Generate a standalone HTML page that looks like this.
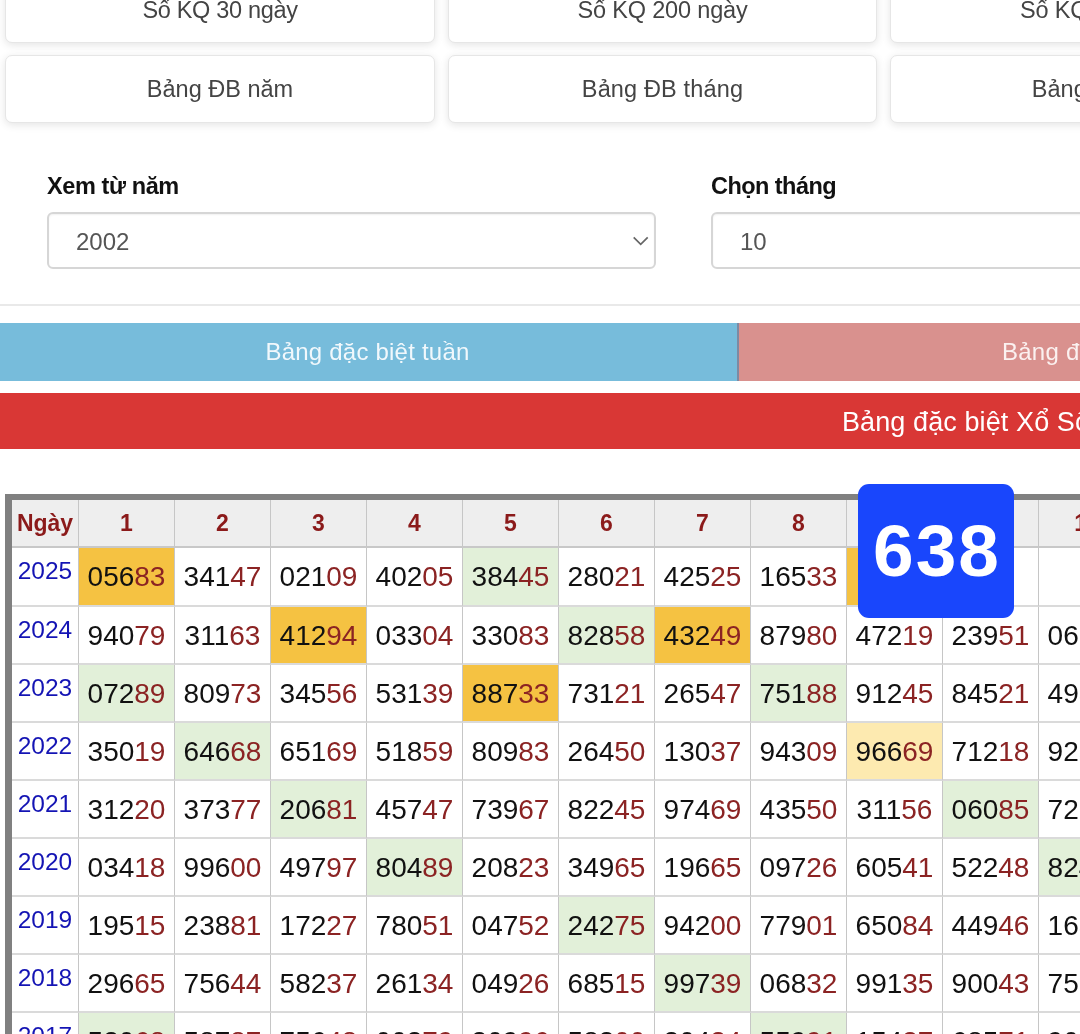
<!DOCTYPE html>
<html lang="vi"><head><meta charset="utf-8"><title>Bảng đặc biệt tháng</title>
<style>
html,body{margin:0;padding:0;background:#fff;}
body{will-change:transform;width:1080px;height:1034px;overflow:hidden;position:relative;font-family:"Liberation Sans",sans-serif;}
.btn{position:absolute;width:430px;height:67px;box-sizing:border-box;border:1px solid #e6e6e6;border-radius:7px;background:#fff;box-shadow:0 2px 8px rgba(0,0,0,.11);color:#444;font-size:23.5px;text-align:center;line-height:66px;white-space:nowrap;}
.b2{height:68px;}
.lbl{position:absolute;font-weight:bold;font-size:23.5px;letter-spacing:-0.4px;color:#111;white-space:nowrap;}
.sel{position:absolute;height:57px;box-sizing:border-box;border:2px solid #d6d6d6;border-radius:6px;background:#fff;box-shadow:inset 0 1px 2px rgba(0,0,0,.06);color:#555;font-size:24px;line-height:56px;padding-left:27px;}
.hr{position:absolute;left:0;top:304px;width:1080px;height:2px;background:#e9e9e9;}
.bar{position:absolute;color:#fff;white-space:nowrap;}
.t{position:absolute;left:5px;top:494px;border-collapse:separate;border-spacing:0;table-layout:fixed;border-left:7px solid #808080;border-top:6px solid #808080;width:1123px;}
.t th,.t td{border-right:1px solid #c6c6c6;border-bottom:2px solid #dadada;padding:0;text-align:center;white-space:nowrap;box-sizing:border-box;width:96px;}
.t th{border-bottom-color:#c8c8c8;height:48px;background:#eee;color:#8b1a1a;font-size:23px;font-weight:bold;}
.t th.d,.t td.y{width:67px;}
.t td{height:58px;font-size:28px;color:#111;padding-top:2px;}
.t tr.r1 td{height:59px;padding-top:0;}
.t tr.r1 td.y{padding-top:9px;}
.t td b{font-weight:normal;color:#8b2323;}
.t td.y{font-size:24.5px;color:#1414b4;vertical-align:top;padding-top:9px;line-height:28px;}
.t td.o{background:#f5c242;}
.t td.g{background:#e2f0d9;}
.t td.y2{background:#fdeab0;}
.ov{position:absolute;left:858px;top:484px;width:156px;height:134px;border-radius:11px;background:#1946fc;color:#fff;font-weight:bold;font-size:73px;text-align:center;line-height:134px;letter-spacing:2px;padding-left:2px;box-sizing:border-box;}
</style></head><body>
<div class="btn" style="left:5px;top:-24px;letter-spacing:-0.33px">Số KQ 30 ngày</div>
<div class="btn" style="left:448px;width:429px;top:-24px;letter-spacing:-0.16px">Số KQ 200 ngày</div>
<div class="btn" style="left:890px;top:-24px;letter-spacing:-0.16px">Số KQ 300 ngày</div>
<div class="btn b2" style="left:5px;top:55px">Bảng ĐB năm</div>
<div class="btn b2" style="left:448px;width:429px;top:55px;letter-spacing:0.15px">Bảng ĐB tháng</div>
<div class="btn b2" style="left:890px;top:55px;padding-left:0px">Bảng ĐB tuần</div>
<div class="lbl" style="left:47px;top:173px">Xem từ năm</div>
<div class="lbl" style="left:711px;top:173px;letter-spacing:-0.55px">Chọn tháng</div>
<div class="sel" style="left:47px;top:212px;width:609px">2002<svg style="position:absolute;left:582px;top:20px" width="20" height="14" viewBox="0 0 20 14"><path d="M2.7 3.3 L9.7 10.3 L16.7 3.3" fill="none" stroke="#666" stroke-width="1.7"/></svg></div>
<div class="sel" style="left:711px;top:212px;width:608px">10</div>
<div class="hr"></div>
<div class="bar" style="left:0;top:323px;width:737px;height:58px;background:#77bcdb;font-size:24px;line-height:58px;text-align:center;letter-spacing:.22px;padding-right:2px;box-sizing:border-box;color:#f1f8fc;">Bảng đặc biệt tuần</div>
<div class="bar" style="left:737px;top:323px;width:737px;height:58px;background:#d9918e;border-left:2px solid #7d8aa3;box-sizing:border-box;font-size:24px;line-height:58px;letter-spacing:.25px;color:#fbf1f0;"><span style="position:absolute;left:263px">Bảng đặc biệt tháng</span></div>
<div class="bar" style="left:0;top:393px;width:1080px;height:56px;background:#d93735;font-size:27px;line-height:58px;letter-spacing:.1px;"><span style="position:absolute;left:842px">Bảng đặc biệt Xổ Số Miền Bắc tháng 10</span></div>
<table class="t"><tr class="h"><th class="d">Ngày</th><th>1</th><th>2</th><th>3</th><th>4</th><th>5</th><th>6</th><th>7</th><th>8</th><th>9</th><th>10</th><th>11</th></tr>
<tr class=r1><td class="y">2025</td><td class="o">056<b>83</b></td><td>341<b>47</b></td><td>021<b>09</b></td><td>402<b>05</b></td><td class="g">384<b>45</b></td><td>280<b>21</b></td><td>425<b>25</b></td><td>165<b>33</b></td><td class="o"></td><td></td><td></td></tr>
<tr><td class="y">2024</td><td>940<b>79</b></td><td>311<b>63</b></td><td class="o">412<b>94</b></td><td>033<b>04</b></td><td>330<b>83</b></td><td class="g">828<b>58</b></td><td class="o">432<b>49</b></td><td>879<b>80</b></td><td>472<b>19</b></td><td>239<b>51</b></td><td>068<b>15</b></td></tr>
<tr><td class="y">2023</td><td class="g">072<b>89</b></td><td>809<b>73</b></td><td>345<b>56</b></td><td>531<b>39</b></td><td class="o">887<b>33</b></td><td>731<b>21</b></td><td>265<b>47</b></td><td class="g">751<b>88</b></td><td>912<b>45</b></td><td>845<b>21</b></td><td>493<b>27</b></td></tr>
<tr><td class="y">2022</td><td>350<b>19</b></td><td class="g">646<b>68</b></td><td>651<b>69</b></td><td>518<b>59</b></td><td>809<b>83</b></td><td>264<b>50</b></td><td>130<b>37</b></td><td>943<b>09</b></td><td class="y2">966<b>69</b></td><td>712<b>18</b></td><td>925<b>68</b></td></tr>
<tr><td class="y">2021</td><td>312<b>20</b></td><td>373<b>77</b></td><td class="g">206<b>81</b></td><td>457<b>47</b></td><td>739<b>67</b></td><td>822<b>45</b></td><td>974<b>69</b></td><td>435<b>50</b></td><td>311<b>56</b></td><td class="g">060<b>85</b></td><td>729<b>03</b></td></tr>
<tr><td class="y">2020</td><td>034<b>18</b></td><td>996<b>00</b></td><td>497<b>97</b></td><td class="g">804<b>89</b></td><td>208<b>23</b></td><td>349<b>65</b></td><td>196<b>65</b></td><td>097<b>26</b></td><td>605<b>41</b></td><td>522<b>48</b></td><td class="g">824<b>70</b></td></tr>
<tr><td class="y">2019</td><td>195<b>15</b></td><td>238<b>81</b></td><td>172<b>27</b></td><td>780<b>51</b></td><td>047<b>52</b></td><td class="g">242<b>75</b></td><td>942<b>00</b></td><td>779<b>01</b></td><td>650<b>84</b></td><td>449<b>46</b></td><td>163<b>20</b></td></tr>
<tr><td class="y">2018</td><td>296<b>65</b></td><td>756<b>44</b></td><td>582<b>37</b></td><td>261<b>34</b></td><td>049<b>26</b></td><td>685<b>15</b></td><td class="g">997<b>39</b></td><td>068<b>32</b></td><td>991<b>35</b></td><td>900<b>43</b></td><td>752<b>81</b></td></tr>
<tr><td class="y">2017</td><td class="g">520<b>68</b></td><td>587<b>87</b></td><td>756<b>48</b></td><td>003<b>79</b></td><td>309<b>96</b></td><td>583<b>00</b></td><td>204<b>24</b></td><td class="g">559<b>91</b></td><td>154<b>37</b></td><td>685<b>71</b></td><td>901<b>52</b></td></tr>
</table>
<div class="ov">638</div>
</body></html>
